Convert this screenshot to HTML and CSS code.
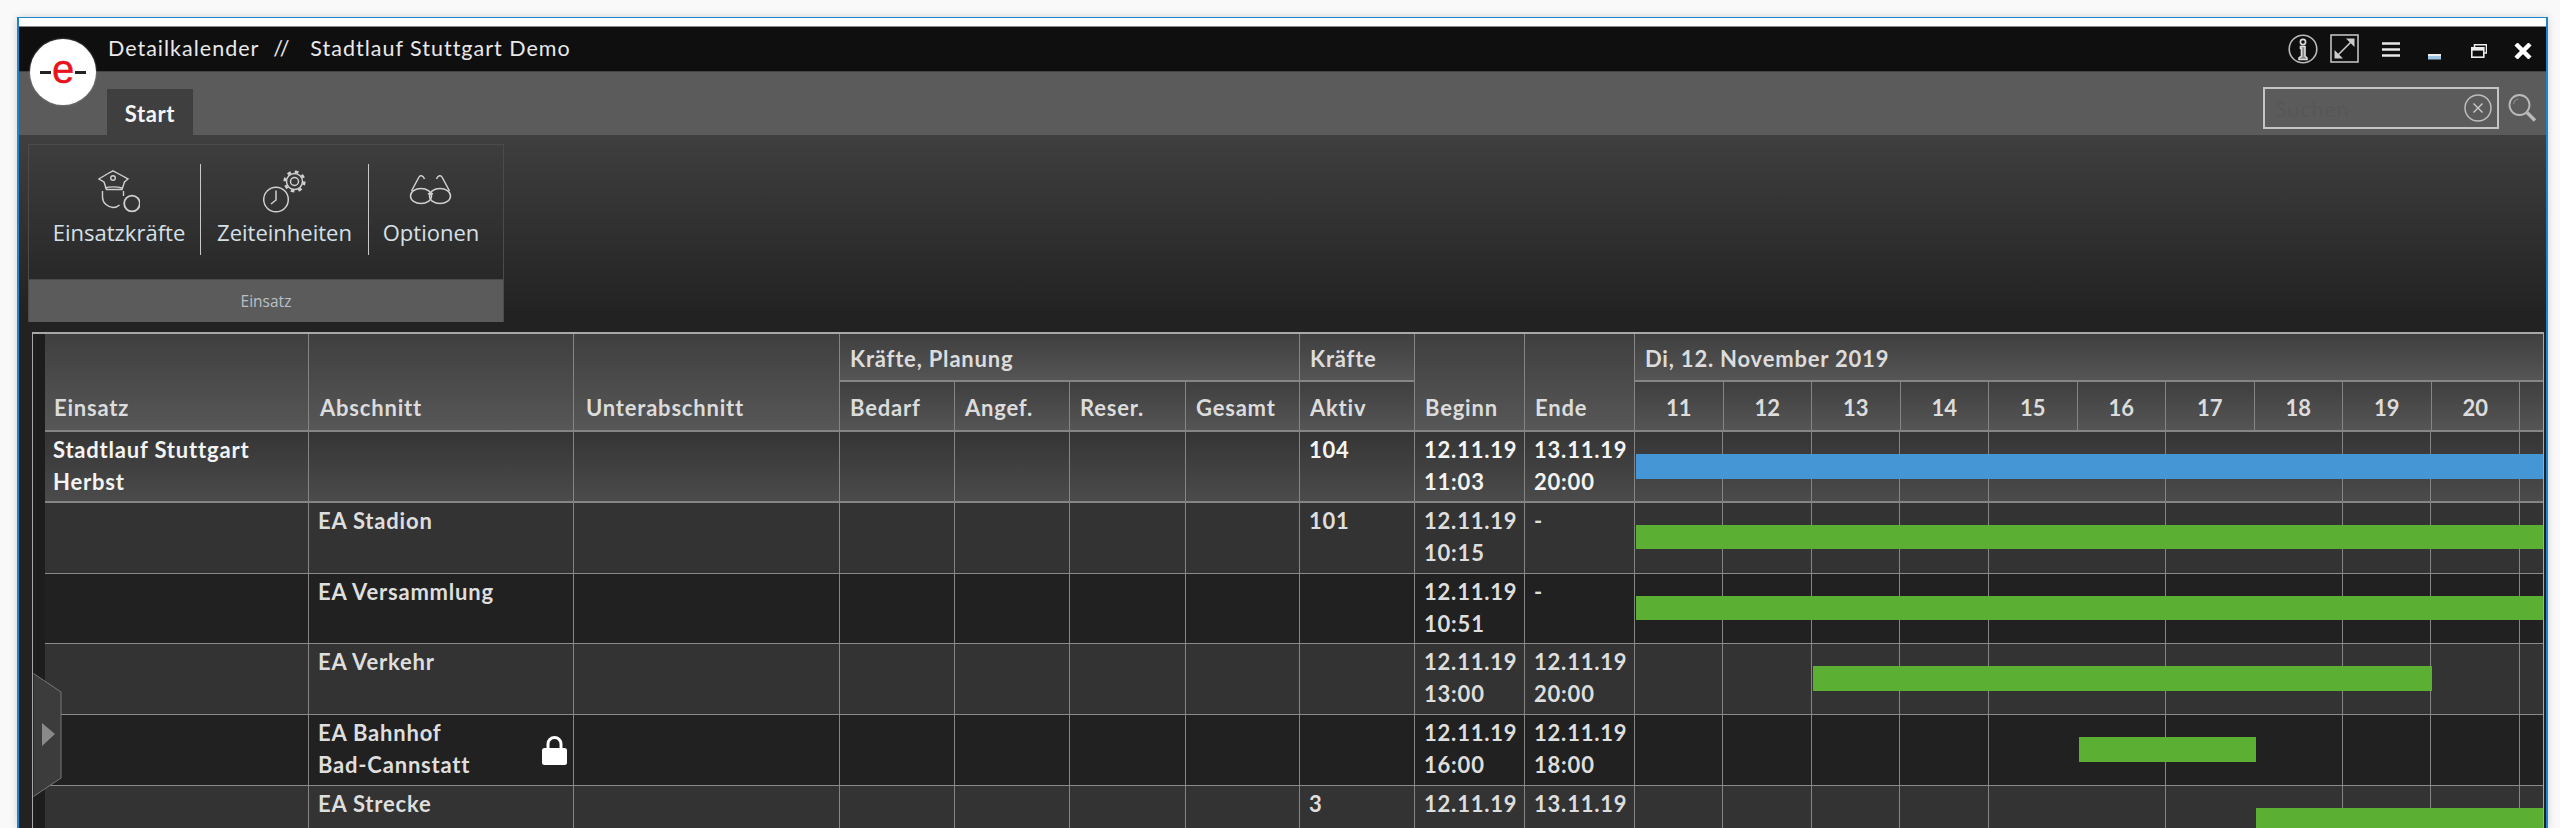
FILE: index.html
```html
<!DOCTYPE html>
<html lang="de">
<head>
<meta charset="utf-8">
<title>Detailkalender</title>
<link rel="stylesheet" href="styles.css">
</head>
<body>
<div class="window">
  <div class="strip"></div>
  <header class="titlebar">
    <div class="title"><span>Detailkalender</span><span class="sl">//</span><span>Stadtlauf Stuttgart Demo</span></div>
    <div class="winicons">
      <svg class="wi-info" width="30" height="30" viewBox="0 0 30 30"><circle cx="15" cy="15" r="13.8" fill="none" stroke="#bbb" stroke-width="1.6"/><circle cx="15" cy="8" r="2.6" fill="none" stroke="#ddd" stroke-width="1.6"/><path d="M12.5 12.5h4.5v9.5l2 2v1.5h-8v-1.5l2.5-2v-7.5h-1z" fill="#888" stroke="#ddd" stroke-width="1.6"/></svg>
      <svg class="wi-exp" width="29" height="29" viewBox="0 0 29 29"><rect x="1" y="1" width="27" height="27" fill="none" stroke="#ccc" stroke-width="1.5"/><path d="M6 23L23 6" stroke="#ccc" stroke-width="1.6"/><path d="M16 4.500h8.500v8.500zM4.500 16v8.500h8.500z" fill="#ccc"/></svg>
      <svg class="wi-menu" width="18" height="15" viewBox="0 0 18 15"><path d="M0 1.500h18M0 7.500h18M0 13.500h18" stroke="#e8e8e8" stroke-width="2.400"/></svg>
      <svg class="wi-min" width="13" height="6" viewBox="0 0 13 6"><rect width="13" height="2" y="0" fill="#eee"/><rect width="13" height="3.500" y="2" fill="#9cc4e4"/></svg>
      <svg class="wi-res" width="16" height="14" viewBox="0 0 16 14"><path d="M3.500 3V.8h12V9H13" fill="none" stroke="#eee" stroke-width="1.500"/><rect x=".8" y="3.800" width="12" height="9.400" fill="none" stroke="#eee" stroke-width="1.600"/><rect x=".8" y="3.800" width="12" height="2.800" fill="#eee"/></svg>
      <svg class="wi-x" width="18" height="16" viewBox="0 0 18 16"><path d="M2 1l14 14M16 1L2 15" stroke="#fff" stroke-width="4.400"/></svg>
    </div>
  </header>
  <div class="logo"><i class="dash"></i><span class="e">e</span><i class="dash"></i></div>
  <nav class="tabbar">
    <div class="tab">Start</div>
    <div class="search">
      <div class="searchbox">
        <span class="placeholder">Suchen</span>
        <svg width="28" height="28" viewBox="0 0 28 28"><circle cx="14" cy="14" r="13" fill="none" stroke="#bdbdbd" stroke-width="1.500"/><path d="M9.500 9.500l9 9M18.500 9.500l-9 9" stroke="#ccc" stroke-width="1.400"/></svg>
      </div>
      <svg class="lens" width="29" height="28" viewBox="0 0 29 28"><circle cx="11.500" cy="11" r="10" fill="none" stroke="#bbb" stroke-width="1.800"/><path d="M5.500 10a6 6 0 0 1 5-5" fill="none" stroke="#888" stroke-width="1.200"/><path d="M19 18.500l8 8" stroke="#bbb" stroke-width="3.400"/></svg>
    </div>
  </nav>
  <section class="ribbon">
    <div class="group">
      <div class="tools">
        <div class="tool t1">
          <svg width="42" height="44" viewBox="0 0 42 44" fill="none" stroke="#d0d0d0" stroke-width="1.400"><path d="M15 .8l5 2.700 10 5.500-3.500 3-2.500 7.500H8.500L6 12 .8 9l9.200-5.500z"/><circle cx="15" cy="8" r="2.300"/><path d="M7 18c4-1.500 12-1.500 17 0M4.500 21v6c0 6 5 10 10.500 10.500 3 0 5-1 6.500-2.500M25.500 21v5"/><circle cx="34" cy="33.500" r="7.800" stroke-width="1.800"/></svg>
          <span>Einsatzkräfte</span>
        </div>
        <div class="tool t2">
          <svg width="44" height="44" viewBox="0 0 44 44" fill="none" stroke="#d0d0d0" stroke-width="1.500"><circle cx="13" cy="29.500" r="12.300"/><path d="M13 20.500v9.500l-5 4"/><circle cx="31.500" cy="11.500" r="8"/><circle cx="31.500" cy="11.500" r="4"/><circle cx="31.500" cy="11.500" r="9.800" stroke-width="2.600" stroke-dasharray="3.600 4.100"/></svg>
          <span>Zeiteinheiten</span>
        </div>
        <div class="tool t3">
          <svg width="44" height="32" viewBox="0 0 44 32" fill="none" stroke="#d0d0d0" stroke-width="1.500"><ellipse cx="12" cy="22" rx="10.500" ry="7.500"/><ellipse cx="31" cy="22" rx="10.500" ry="7.500"/><path d="M19 20c2-1 3-1 5 0M2.500 17L10 3c1-2 4-2 5.500 2M40.500 17L33 3c-1-2-4-2-5.500 2"/></svg>
          <span>Optionen</span>
        </div>
      </div>
      <div class="groupname">Einsatz</div>
    </div>
  </section>
  <main class="tablearea">
    <div class="frame">
      <div class="handle">
        <svg class="handleshape" width="29" height="124" viewBox="0 0 29 124"><path d="M.500 .500L28 19v86L.500 123.500" fill="#3c3c3c" stroke="#777"/><path d="M9 50l13 11-13 12z" fill="#8a8a8a"/></svg>
      </div>
      <div class="grid">
        <div class="head">
          <div class="hc h-tall c1">Einsatz</div>
          <div class="hc h-tall c2">Abschnitt</div>
          <div class="hc h-tall c3">Unterabschnitt</div>
          <div class="hc h-top c4-7">Kräfte, Planung</div>
          <div class="hc h-top c8">Kräfte</div>
          <div class="hc h-tall c9">Beginn</div>
          <div class="hc h-tall c10">Ende</div>
          <div class="hc h-top c11">Di, 12. November 2019</div>
          <div class="hc h-sub c4">Bedarf</div>
          <div class="hc h-sub c5">Angef.</div>
          <div class="hc h-sub c6">Reser.</div>
          <div class="hc h-sub c7">Gesamt</div>
          <div class="hc h-sub c8">Aktiv</div>
          <div class="hours c11">
            <div class="hour">11</div><div class="hour">12</div><div class="hour">13</div><div class="hour">14</div><div class="hour">15</div><div class="hour">16</div><div class="hour">17</div><div class="hour">18</div><div class="hour">19</div><div class="hour">20</div><div class="hour"></div>
          </div>
        </div>

        <div class="row root">
          <div class="cell strong">Stadtlauf Stuttgart<br>Herbst</div><div class="cell"></div><div class="cell"></div><div class="cell"></div><div class="cell"></div><div class="cell"></div><div class="cell"></div>
          <div class="cell">104</div><div class="cell date">12.11.19<br>11:03</div><div class="cell date">13.11.19<br>20:00</div>
          <div class="gantt"><div class="bar blue" style="left:1px;width:907px"></div></div>
        </div>
        <div class="row light">
          <div class="cell"></div><div class="cell abs">EA Stadion</div><div class="cell"></div><div class="cell"></div><div class="cell"></div><div class="cell"></div><div class="cell"></div>
          <div class="cell">101</div><div class="cell date">12.11.19<br>10:15</div><div class="cell date">-</div>
          <div class="gantt"><div class="bar green" style="left:1px;width:907px"></div></div>
        </div>
        <div class="row dark">
          <div class="cell"></div><div class="cell abs">EA Versammlung</div><div class="cell"></div><div class="cell"></div><div class="cell"></div><div class="cell"></div><div class="cell"></div>
          <div class="cell"></div><div class="cell date">12.11.19<br>10:51</div><div class="cell date">-</div>
          <div class="gantt"><div class="bar green" style="left:1px;width:907px"></div></div>
        </div>
        <div class="row light">
          <div class="cell"></div><div class="cell abs">EA Verkehr</div><div class="cell"></div><div class="cell"></div><div class="cell"></div><div class="cell"></div><div class="cell"></div>
          <div class="cell"></div><div class="cell date">12.11.19<br>13:00</div><div class="cell date">12.11.19<br>20:00</div>
          <div class="gantt"><div class="bar green" style="left:178px;width:619px"></div></div>
        </div>
        <div class="row dark">
          <div class="cell"></div>
          <div class="cell abs lockcell">EA Bahnhof<br>Bad-Cannstatt
            <svg class="lock" width="25" height="29" viewBox="0 0 25 29"><path d="M6 13V8a6.500 6.500 0 0 1 13 0v5" fill="none" stroke="#fff" stroke-width="3"/><rect x="0" y="12" width="25" height="17" rx="2.500" fill="#fff"/></svg>
          </div>
          <div class="cell"></div><div class="cell"></div><div class="cell"></div><div class="cell"></div><div class="cell"></div>
          <div class="cell"></div><div class="cell date">12.11.19<br>16:00</div><div class="cell date">12.11.19<br>18:00</div>
          <div class="gantt"><div class="bar green" style="left:444px;width:177px"></div></div>
        </div>
        <div class="row light">
          <div class="cell"></div><div class="cell abs">EA Strecke</div><div class="cell"></div><div class="cell"></div><div class="cell"></div><div class="cell"></div><div class="cell"></div>
          <div class="cell">3</div><div class="cell date">12.11.19</div><div class="cell date">13.11.19</div>
          <div class="gantt"><div class="bar green" style="left:621px;width:287px"></div></div>
        </div>
      </div>
    </div>
  </main>
</div>
</body>
</html>
```
FILE: styles.css
```css
* { box-sizing: border-box; }
html, body { margin: 0; height: 828px; overflow: hidden; background: #f9f9f9; }
body { font-family: Lato, "Open Sans", sans-serif; color: #ddd; padding: 17px 12px 0 17px; }
.window {
  position: relative;
  height: 811px;
  overflow: hidden;
  border: solid #1b86cb;
  border-width: 1px 2px 0 2px;
  box-shadow: 0 0 8px rgba(0,0,0,.16);
  background: #222;
  display: flex;
  flex-direction: column;
}
.strip { height: 9px; background: #fff; flex: none; border-bottom: 1px solid #888; }
.titlebar {
  height: 44px; flex: none; background: #0f0f0f;
  display: flex; justify-content: space-between;
  padding-left: 89px;
}
.title { display: flex; font-size: 21.500px; color: #e9e9e9; line-height: 43px; letter-spacing: 1px; }
.title .sl { width: 18px; margin: 0 19px 0 14px; letter-spacing: 1.500px; }
.winicons { position: relative; display: flex; align-items: flex-start; padding: 7px 14px 0 0; }
.wi-info { margin-right: 12px; }
.wi-exp { margin-right: 23px; }
.wi-menu { margin: 8px 28px 0 0; }
.wi-min { margin: 20px 30px 0 0; }
.wi-res { margin: 10px 27px 0 0; }
.wi-x { margin-top: 9px; }
.logo {
  position: absolute; left: 11px; top: 21px; width: 66px; height: 66px;
  border-radius: 50%; background: #fff; z-index: 3;
  display: flex; align-items: center; justify-content: center; gap: 1px;
  box-shadow: 0 0 2px #999;
}
.logo .e { color: #e8141c; font: 40px/60px "Liberation Sans", sans-serif; margin-top: -6px; -webkit-text-stroke: .5px #e8141c; }
.logo .dash { width: 11px; height: 3px; background: #222; }
.tabbar {
  height: 64px; flex: none; background: #5b5b5b;
  display: flex; justify-content: space-between; align-items: flex-end;
  padding-left: 88px; border-top: 1px solid #444;
}
.tab {
  width: 86px; height: 46px; background: #3f3f3f; color: #f4f4f4;
  font-weight: 700; font-size: 22px; line-height: 50px; text-align: center; letter-spacing: .6px;
}
.search { display: flex; align-self: flex-start; align-items: center; margin-top: 15px; padding-right: 9px; gap: 9px; }
.searchbox {
  width: 236px; height: 42px; border: 2px solid #c4c4c4;
  display: flex; justify-content: space-between; align-items: center;
  padding: 0 5px 0 10px;
}
.placeholder { color: #575757; font-size: 22px; letter-spacing: .6px; }
.ribbon {
  height: 197px; flex: none; padding: 9px 0 0 9px;
  background: linear-gradient(#3f3f3f, #222 92%);
}
.group {
  width: 476px; height: 178px; border: 1px solid #4b4b4b; border-bottom: 0;
  display: flex; flex-direction: column;
}
.tools { height: 135px; display: flex; padding-top: 19px; }
.tool {
  height: 91px; display: flex; flex-direction: column; align-items: center;
  font-family: "Open Sans", sans-serif; font-size: 22px; color: #d6e0e8; line-height: 28px;
  position: relative;
}
.tool span { position: absolute; top: 54px; white-space: nowrap; }
.tool svg { margin-top: 6px; }
.t1 { width: 172px; border-right: 1px solid #c8c8c8; padding-left: 9px; }
.t2 { width: 168px; border-right: 1px solid #c8c8c8; }
.t3 { width: 134px; padding-right: 10px; }
.t3 svg { margin-top: 10px; }
.groupname {
  height: 43px; background: #5b5b5b; border-top: 1px solid #4a4a4a;
  text-align: center; color: #b9c0c6; font: 15.500px/42px "Open Sans", sans-serif;
}
.tablearea { flex: 1; min-height: 0; padding: 0 0 0 13px; background: #222; }
.frame {
  position: relative; height: 100%; width: 2512px;
  border: solid #a8a8a8; border-width: 2px 1px 0 1px;
  padding-left: 12px; background: #1d1d1d;
}
.handle { position: absolute; left: 0; top: 339px; z-index: 4; line-height: 0; }
.grid { display: flex; flex-direction: column; }
.head {
  display: grid; height: 98px; flex: none;
  grid-template-columns: 264px 265px 266px 115px 115px 116px 114px 115px 110px 110px 908px;
  grid-template-rows: 48px 48px;
  border-bottom: 2px solid #858585;
}
.hc {
  border-right: 1px solid #858585; font-weight: 700; font-size: 22px; line-height: 32px; color: #dcdcdc;
  letter-spacing: .8px;
  padding: 0 0 6px 10px; display: flex; align-items: flex-end; white-space: nowrap;
  background: linear-gradient(#3f3f3f, #555);
}
.h-tall { grid-row: 1 / span 2; background: linear-gradient(#3f3f3f, #575757); }
.h-top { grid-row: 1; border-bottom: 2px solid #858585; padding-bottom: 5px; }
.h-sub { grid-row: 2; }
.c1 { grid-column: 1; padding-left: 9px; } .c2 { grid-column: 2; padding-left: 11px; } .c3 { grid-column: 3; padding-left: 12px; }
.c4 { grid-column: 4; } .c5 { grid-column: 5; } .c6 { grid-column: 6; } .c7 { grid-column: 7; }
.c4-7 { grid-column: 4 / span 4; }
.c8 { grid-column: 8; }
.c9 { grid-column: 9; } .c10 { grid-column: 10; }
.c11 { grid-column: 11; border-right: 0; }
.hours { grid-row: 2; display: flex; }
.hour {
  flex: 0 0 88.500px; border-right: 1px solid #858585; text-align: center; font-weight: 700; font-size: 22px;
  line-height: 32px; padding-top: 10px; color: #dcdcdc;
  background: linear-gradient(#3f3f3f, #555);
}
.hour:last-child { flex: 0 0 23px; border-right: 0; }
.row {
  display: grid; height: 70.750px; flex: none;
  grid-template-columns: 264px 265px 266px 115px 115px 116px 114px 115px 110px 110px 908px;
  border-bottom: 1px solid #8a8a8a;
}
.row.root { background: linear-gradient(#353535, #4b4b4b); border-bottom: 2px solid #858585; }
.row.light { background: #333; }
.row.dark { background: #212121; }
.cell {
  border-right: 1px solid #858585; padding: 2px 4px 0 9px; font-weight: 700; font-size: 22px; line-height: 32px; color: #dedede;
  letter-spacing: .8px;
  position: relative; white-space: nowrap;
}
.cell.strong { color: #fff; padding-left: 8px; }
.row.root .cell { color: #f4f4f4; }
.lock { position: absolute; right: 6px; top: 21px; }
.gantt {
  position: relative;
  background-image: repeating-linear-gradient(to right, transparent 0 87.500px, #858585 87.500px 88.500px);
}
.bar { position: absolute; top: 22px; height: 24.500px; }
.blue { background: #4596d4; }
.green { background: #5bb033; }
```
